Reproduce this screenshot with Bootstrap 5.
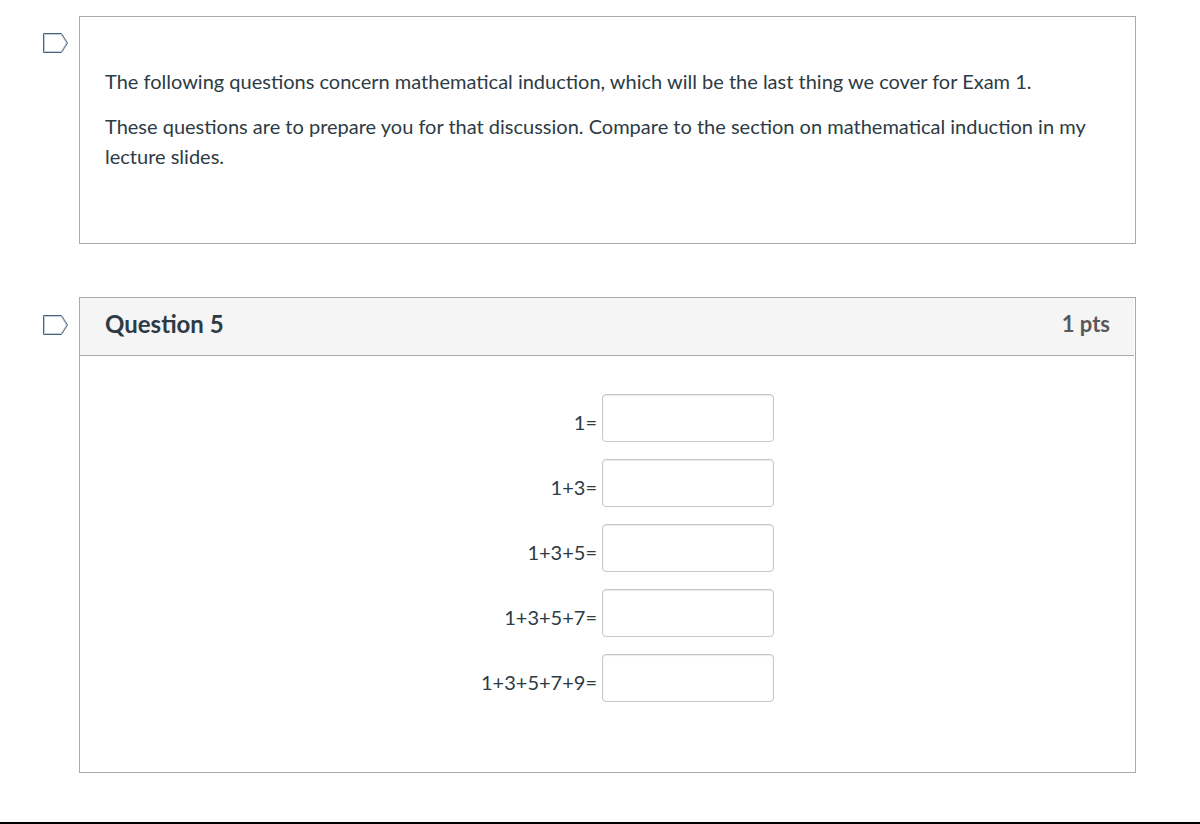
<!DOCTYPE html>
<html lang="en">
<head>
<meta charset="utf-8">
<meta name="viewport" content="width=device-width, initial-scale=1">
<title>Quiz</title>
<link href="https://cdn.jsdelivr.net/npm/bootstrap@5.3.0/dist/css/bootstrap.min.css" rel="stylesheet">
<style>
body{font-family:Lato,sans-serif;font-size:20px;line-height:30px;color:#2d3b45}
.quiz{padding:16px 64px 49px 43px;border-bottom:2px solid #000}
.quiz-item + .quiz-item{margin-top:53px}
.flag{width:26px;height:20px;margin:17px 10px 0 0;padding:0;border:0;background:none;display:block}
.question .flag{margin-top:18px}
.flag svg{display:block}
.flag path{fill:none;stroke:#48627b}
.flag .inner{stroke:#c3ced8}
.quiz-box{border:1px solid #aaa;min-width:0}
.intro{padding:49px 25px 72px}
.intro p{margin-bottom:15px}
.question-head{background:#f5f5f5;border-bottom:1px solid #aaa;margin-right:1px;padding:11px 24px 16px 25px}
.question-head h2{font-size:24px;line-height:30px;font-weight:700}
.pts{font-size:22px;font-weight:700;color:#595959}
.answers{padding:38px 25px 70px;gap:17px}
.answer{display:grid;grid-template-columns:492px 172px;column-gap:5px}
.answer label{padding-top:13px}
.answer .form-control{height:48px;border:1px solid #c7c7c7;border-radius:4px;box-shadow:inset 0 1px 1px rgba(0,0,0,.08);font-size:20px}
</style>
</head>
<body>
<main class="quiz">
<section class="quiz-item d-flex align-items-start">
<button class="flag flex-shrink-0" type="button" aria-label="Flag this text"><svg width="26" height="20" viewBox="0 0 26 20"><path class="inner" d="M1.5 1.5H18L23.5 10L18 18.5H1.5Z"/><path d="M.5 .5H18.5L24.5 10L18.5 19.5H.5Z"/></svg></button>
<div class="quiz-box intro flex-grow-1">
<p>The following questions concern mathematical induction, which will be the last thing we cover for Exam 1.</p>
<p class="mb-0">These questions are to prepare you for that discussion. Compare to the section on mathematical induction in my lecture slides.</p>
</div>
</section>
<section class="quiz-item question d-flex align-items-start">
<button class="flag flex-shrink-0" type="button" aria-label="Flag question 5"><svg width="26" height="20" viewBox="0 0 26 20"><path class="inner" d="M1.5 1.5H18L23.5 10L18 18.5H1.5Z"/><path d="M.5 .5H18.5L24.5 10L18.5 19.5H.5Z"/></svg></button>
<div class="quiz-box flex-grow-1">
<header class="question-head d-flex justify-content-between"><h2 class="mb-0">Question 5</h2><span class="pts">1 pts</span></header>
<form class="answers d-flex flex-column">
<div class="answer"><label class="text-end" for="a1">1=</label><input class="form-control" id="a1" type="text"></div>
<div class="answer"><label class="text-end" for="a2">1+3=</label><input class="form-control" id="a2" type="text"></div>
<div class="answer"><label class="text-end" for="a3">1+3+5=</label><input class="form-control" id="a3" type="text"></div>
<div class="answer"><label class="text-end" for="a4">1+3+5+7=</label><input class="form-control" id="a4" type="text"></div>
<div class="answer"><label class="text-end" for="a5">1+3+5+7+9=</label><input class="form-control" id="a5" type="text"></div>
</form>
</div>
</section>
</main>
</body>
</html>
